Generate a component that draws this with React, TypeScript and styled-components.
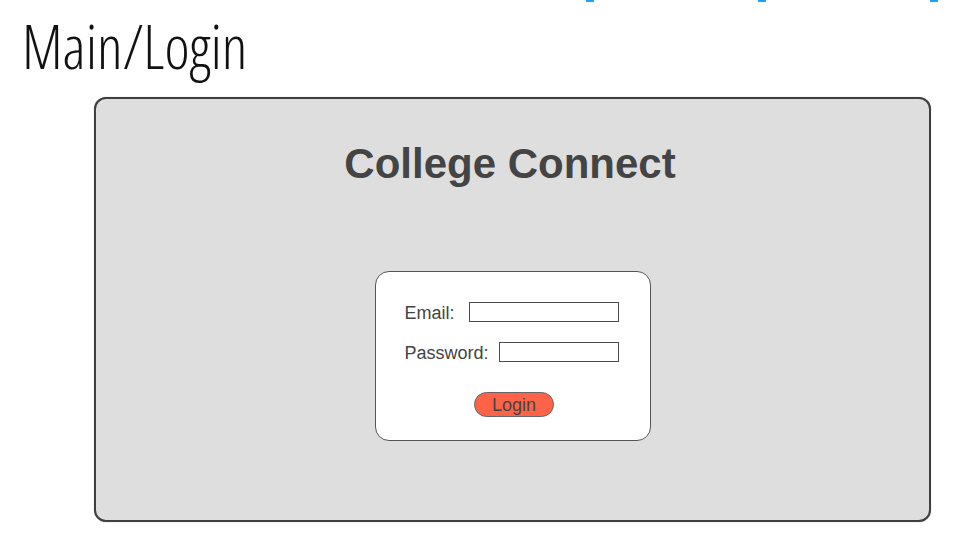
import React from "react";
import styled, { createGlobalStyle } from "styled-components";

const Global = createGlobalStyle`
  html, body { margin: 0; padding: 0; background: #ffffff; }
  body { width: 974px; height: 537px; overflow: hidden; font-family: "Liberation Sans", Arial, sans-serif; }
`;

const Page = styled.div`
  width: 974px;
  height: 537px;
  display: flex;
  flex-direction: column;
  box-sizing: border-box;
`;

const TopStrip = styled.div`
  display: flex;
  height: 2px;
  padding-left: 586px;
  gap: 164px;
`;

const Mark = styled.span`
  display: block;
  width: 8px;
  height: 2px;
  background: #1aa3ff;
`;

const PageTitle = styled.h1`
  margin: 0;
  padding: 12px 0 0 22px;
  height: 83px;
  box-sizing: border-box;
  font-family: "Open Sans", "DejaVu Sans Condensed", sans-serif;
  font-stretch: 75%;
  font-weight: 300;
  font-size: 60px;
  line-height: 64px;
  color: #111;
`;

const Panel = styled.section`
  margin: 12px 0 0 94px;
  width: 837px;
  height: 425px;
  box-sizing: border-box;
  background: #dedede;
  border: 2px solid #3f3f3f;
  border-radius: 12px;
  box-shadow: 0 0 1px rgba(0,0,0,0.4);
  display: flex;
  flex-direction: column;
  align-items: center;
`;

const AppName = styled.h2`
  margin: 41px 0 0 -5px;
  font-family: "Liberation Sans", Arial, sans-serif;
  font-weight: 700;
  font-size: 42px;
  line-height: 48px;
  color: #444444;
`;

const Card = styled.form`
  margin-top: 83px;
  width: 276px;
  height: 170px;
  box-sizing: border-box;
  background: #ffffff;
  border: 1px solid #555;
  border-radius: 14px;
  padding: 30px 31px 0 29px;
  display: flex;
  flex-direction: column;
`;

const Row = styled.div<{ $mt?: number }>`
  display: flex;
  align-items: center;
  justify-content: space-between;
  height: 20px;
  margin-top: ${(p) => p.$mt ?? 0}px;
`;

const Label = styled.label`
  font-family: "Liberation Sans", Arial, sans-serif;
  font-size: 18px;
  line-height: 20px;
  padding-top: 1px;
  color: #444;
  white-space: nowrap;
`;

const Field = styled.input<{ $w: number }>`
  width: ${(p) => p.$w}px;
  height: 20px;
  box-sizing: border-box;
  border: 1px solid #4a4a4a;
  background: #fff;
  padding: 0;
  margin: 0;
  outline: none;
`;

const ButtonRow = styled.div`
  display: flex;
  justify-content: center;
  margin-top: 30px;
  padding-left: 5px;
`;

const LoginButton = styled.button`
  width: 80px;
  height: 25px;
  box-sizing: border-box;
  background: #ff6347;
  border: 1px solid #666;
  border-radius: 13px;
  font-family: "Liberation Sans", Arial, sans-serif;
  font-size: 18px;
  color: #444;
  padding: 0;
  line-height: 22px;
`;

export default function App() {
  return (
    <Page>
      <Global />
      <TopStrip>
        <Mark />
        <Mark />
        <Mark />
      </TopStrip>
      <PageTitle>Main/Login</PageTitle>
      <Panel>
        <AppName>College Connect</AppName>
        <Card onSubmit={(e) => e.preventDefault()}>
          <Row>
            <Label>Email:</Label>
            <Field $w={150} />
          </Row>
          <Row $mt={20}>
            <Label>Password:</Label>
            <Field $w={120} />
          </Row>
          <ButtonRow>
            <LoginButton type="submit">Login</LoginButton>
          </ButtonRow>
        </Card>
      </Panel>
    </Page>
  );
}
